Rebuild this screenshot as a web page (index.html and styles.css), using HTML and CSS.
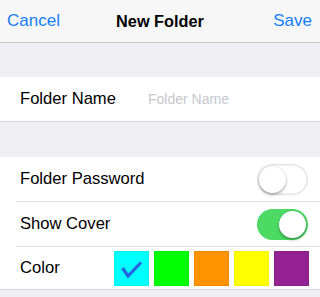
FILE: index.html
```html
<!DOCTYPE html>
<html>
<head>
<meta charset="utf-8">
<link rel="stylesheet" href="styles.css">
</head>
<body>
<div class="screen">
  <header class="nav">
    <span class="nav-btn">Cancel</span>
    <span class="nav-title">New Folder</span>
    <span class="nav-btn">Save</span>
  </header>
  <div class="spacer"></div>
  <section class="group">
    <div class="row">
      <span class="label label-fixed">Folder Name</span>
      <span class="placeholder">Folder Name</span>
    </div>
  </section>
  <div class="spacer"></div>
  <section class="group">
    <div class="row sep">
      <span class="label">Folder Password</span>
      <span class="toggle"><span class="knob"></span></span>
    </div>
    <div class="row sep">
      <span class="label">Show Cover</span>
      <span class="toggle on"><span class="knob"></span></span>
    </div>
    <div class="row color-row">
      <span class="label">Color</span>
      <div class="swatches">
        <span class="swatch cyan">
          <svg width="35" height="35" viewBox="0 0 35 35"><path d="M8.5 17 L14 25 L27 11.5" fill="none" stroke="#2463e2" stroke-width="3.2" stroke-linecap="butt" stroke-linejoin="miter"/></svg>
        </span>
        <span class="swatch green"></span>
        <span class="swatch orange"></span>
        <span class="swatch yellow"></span>
        <span class="swatch purple"></span>
      </div>
    </div>
  </section>
</div>
</body>
</html>
```
FILE: styles.css
```css
html, body {
  margin: 0;
  padding: 0;
}
body {
  width: 320px;
  height: 297px;
  overflow: hidden;
  background: #efeff4;
  font-family: "Liberation Sans", Arial, sans-serif;
  color: #000;
}
.screen {
  display: flex;
  flex-direction: column;
}
.nav {
  height: 42px;
  background: #f7f7f7;
  border-bottom: 1px solid #c4c4c8;
  display: flex;
  align-items: center;
  justify-content: space-between;
  padding: 0 8px 0 7px;
  position: relative;
}
.nav-btn {
  color: #157efb;
  font-size: 17px;
  line-height: 20px;
}
.nav-title {
  font-weight: 700;
  font-size: 16.3px;
  line-height: 20px;
  position: absolute;
  left: 0;
  right: 0;
  text-align: center;
  pointer-events: none;
}
.spacer {
  height: 34px;
}
.group + .spacer {
  height: 35px;
}
.group {
  background: #fff;
  border-bottom: 1px solid #d6d6da;
}
.row {
  height: 44px;
  display: flex;
  align-items: center;
  padding: 0 12px 0 20px;
}
.row.sep {
  border-bottom: 1px solid #dcdce0;
  margin-left: 16px;
  padding-left: 4px;
}
.label {
  font-size: 16.6px;
  line-height: 20px;
  flex: 1;
}
.label-fixed {
  flex: 0 0 128px;
}
.placeholder {
  font-size: 14px;
  color: #c7c7cd;
  line-height: 20px;
}
.toggle {
  width: 51px;
  height: 31px;
  box-sizing: border-box;
  border-radius: 16px;
  background: #fff;
  box-shadow: inset 0 0 0 1.5px #e4e4e7;
  display: flex;
  align-items: center;
  padding: 2px;
}
.toggle.on {
  background: #4cd964;
  box-shadow: none;
  justify-content: flex-end;
}
.knob {
  width: 27px;
  height: 27px;
  border-radius: 50%;
  background: #fff;
  box-shadow: 0 2px 3px rgba(0,0,0,0.28), 0 0 0 0.5px rgba(0,0,0,0.08);
}
.color-row {
  height: 42px;
  padding-right: 11px;
}
.swatches {
  display: flex;
  gap: 5px;
  padding-top: 1px;
}
.swatch {
  width: 35px;
  height: 35px;
  display: block;
  box-shadow: inset 0 0 0 1px rgba(0,0,0,0.06);
}
.swatch svg {
  display: block;
}
.cyan { background: #00ffff; }
.green { background: #00ff00; }
.orange { background: #ff9300; }
.yellow { background: #ffff00; }
.purple { background: #942192; }
```
